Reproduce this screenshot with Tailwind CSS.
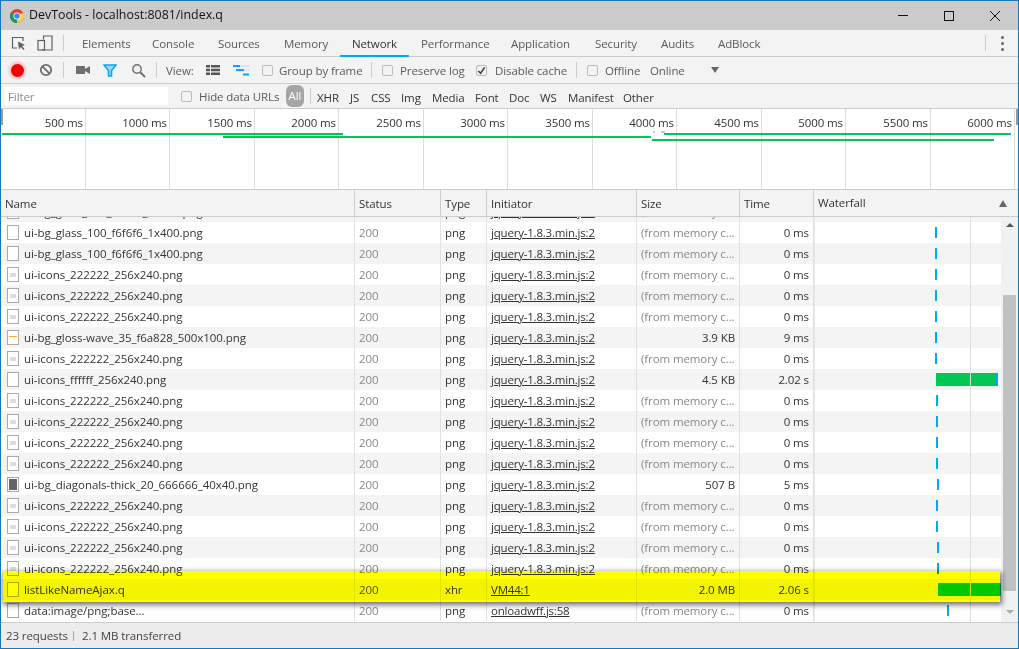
<!DOCTYPE html>
<html lang="en">
<head>
    <meta charset="UTF-8">
    <title>DevTools - localhost:8081/index.q</title>
    <script src="https://cdn.jsdelivr.net/npm/@tailwindcss/browser@4"></script>
</head>
<body class="bg-[#f3f3f3] font-['Open_Sans',sans-serif] text-[11.5px] tracking-[-0.1px] text-[#333]">
<div id="win" class="relative w-[1019px] h-[649px] overflow-hidden flex flex-col border-x border-b border-t border-[#1a76bd] bg-[#f3f3f3]">

    <!-- title bar -->
    <div class="h-[29px] shrink-0 bg-[#cbcbcb] flex items-center pl-[8px]">
        <svg width="16" height="16" viewBox="0 0 16 16" class="mr-[4px]">
            <circle cx="8" cy="8" r="7" fill="#db4437"/>
            <path d="M8 8 L1.9 11.5 A7 7 0 0 0 8 15 Z" fill="#0f9d58"/>
            <path d="M8 8 L1.9 11.5 A7 7 0 0 1 1.9 4.5 Z" fill="#0f9d58"/>
            <path d="M8 8 L14.1 4.5 A7 7 0 0 1 8 15 Z" fill="#ffcd40"/>
            <circle cx="8" cy="8" r="3.6" fill="#fff"/>
            <circle cx="8" cy="8" r="2.8" fill="#4285f4"/>
        </svg>
        <span class="text-[12.4px] tracking-normal text-[#111]">DevTools - localhost:8081/index.q</span>
        <div class="ml-auto flex items-center">
            <div class="w-[46px] flex justify-center"><div class="w-[10px] h-px bg-[#111]"></div></div>
            <div class="w-[46px] flex justify-center"><div class="w-[10px] h-[10px] border border-[#111]"></div></div>
            <div class="w-[46px] flex justify-center">
                <svg width="10" height="10" viewBox="0 0 10 10"><path d="M0 0 L10 10 M10 0 L0 10" stroke="#111" stroke-width="1"/></svg>
            </div>
        </div>
    </div>

    <!-- tabs -->
    <div class="h-[27px] shrink-0 flex items-center border-b border-[#ccc] text-[#5a5a5a] whitespace-nowrap">
        <svg width="16" height="16" viewBox="0 0 16 16" class="ml-[10px]">
            <path d="M6 13 H1.5 V2.5 H12 V6" fill="none" stroke="#5f5f5f" stroke-width="1.2"/>
            <path d="M7 6.5 L14 10 L11 11 L13.5 14 L12.3 15 L10 12 L8 14.5 Z" fill="#5f5f5f"/>
        </svg>
        <svg width="16" height="16" viewBox="0 0 16 16" class="ml-[10px]">
            <path d="M6.5 4.5 V1 H15 V15 H5" fill="none" stroke="#5f5f5f" stroke-width="1.2"/>
            <rect x="1" y="5.5" width="6.5" height="9.5" fill="none" stroke="#5f5f5f" stroke-width="1.2"/>
        </svg>
        <div class="w-px h-[16px] bg-[#ccc] ml-[10px]"></div>
        <span class="ml-[18px] w-[47px] pt-[2px]">Elements</span>
        <span class="ml-[23px] w-[43px] pt-[2px]">Console</span>
        <span class="ml-[23px] w-[42px] pt-[2px]">Sources</span>
        <span class="ml-[24px] w-[44px] pt-[2px]">Memory</span>
        <span class="relative ml-[12px] h-full w-[69px] flex items-center justify-center pt-[2px] text-[#333]">Network<span class="absolute left-0 right-0 -bottom-px h-[2px] bg-[#03a9f4]"></span></span>
        <span class="ml-[12px] w-[66px] pt-[2px]">Performance</span>
        <span class="ml-[24px] w-[60px] pt-[2px]">Application</span>
        <span class="ml-[24px] w-[41px] pt-[2px]">Security</span>
        <span class="ml-[25px] w-[33px] pt-[2px]">Audits</span>
        <span class="ml-[24px] pt-[2px]">AdBlock</span>
        <div class="ml-auto w-px h-[16px] bg-[#ccc] mr-[15px]"></div>
        <div class="flex flex-col gap-[3px] mr-[14px]">
            <div class="w-[3px] h-[3px] rounded-full bg-[#666]"></div>
            <div class="w-[3px] h-[3px] rounded-full bg-[#666]"></div>
            <div class="w-[3px] h-[3px] rounded-full bg-[#666]"></div>
        </div>
    </div>

    <!-- network toolbar -->
    <div class="h-[27px] shrink-0 flex items-center border-b border-[#ccc] text-[#5a5a5a] whitespace-nowrap">
        <div class="ml-[10px] w-[13px] h-[13px] rounded-full bg-[#ef0000] shadow-[0_0_3px_2px_rgba(230,80,80,0.35)]"></div>
        <svg width="14" height="14" viewBox="0 0 14 14" class="ml-[15px]">
            <circle cx="7" cy="7" r="5.2" fill="none" stroke="#6e6e6e" stroke-width="1.8"/>
            <path d="M3.4 3.4 L10.6 10.6" stroke="#6e6e6e" stroke-width="1.8"/>
        </svg>
        <div class="w-px h-[16px] bg-[#ccc] ml-[10px]"></div>
        <svg width="14" height="10" viewBox="0 0 14 10" class="ml-[12px]">
            <rect x="0" y="1" width="9" height="8" fill="#6e6e6e"/>
            <path d="M9 4 L14 1 V9 L9 6 Z" fill="#6e6e6e"/>
        </svg>
        <svg width="14" height="13" viewBox="0 0 14 13" class="ml-[13px]">
            <path d="M1 1 H13 L8.5 6.5 V12 H5.5 V6.5 Z" fill="#9fdcfa" stroke="#03a9f4" stroke-width="1.6"/>
        </svg>
        <svg width="15" height="15" viewBox="0 0 15 15" class="ml-[14px]">
            <circle cx="6" cy="6" r="4.2" fill="none" stroke="#6e6e6e" stroke-width="1.4"/>
            <path d="M9 9 L14 14" stroke="#6e6e6e" stroke-width="1.8"/>
        </svg>
        <div class="w-px h-[16px] bg-[#ccc] ml-[10px]"></div>
        <span class="ml-[9px] w-[28px] pt-[2px]">View:</span>
        <svg width="14" height="10" viewBox="0 0 14 10" class="ml-[12px]">
            <path d="M0 0 H4 V2.5 H0 Z M5 0 H14 V2.5 H5 Z M0 3.7 H4 V6.2 H0 Z M5 3.7 H14 V6.2 H5 Z M0 7.5 H4 V10 H0 Z M5 7.5 H14 V10 H5 Z" fill="#555"/>
        </svg>
        <svg width="17" height="11" viewBox="0 0 17 11" class="ml-[13px]">
            <path d="M0 0 H7 V2 H0 Z M3 4 H11 V6 H3 Z M10 8.5 H16 V10.5 H10 Z" fill="#03a9f4"/>
            <path d="M7 0 H17 V2 H7 Z M11 4 H17 V6 H11 Z" fill="#cfeafa"/>
        </svg>
        <span class="ml-[12px] w-[11px] h-[11px] rounded-[2px] border border-[#bbb] bg-[#f3f3f3]"></span>
        <span class="ml-[6px] w-[83px] pt-[2px]">Group by frame</span>
        <div class="w-px h-[16px] bg-[#ccc] ml-[9px]"></div>
        <span class="ml-[10px] w-[11px] h-[11px] rounded-[2px] border border-[#bbb] bg-[#f3f3f3]"></span>
        <span class="ml-[7px] w-[65px] pt-[2px]">Preserve log</span>
        <span class="ml-[11px] w-[11px] h-[11px] rounded-[2px] border border-[#bbb] bg-[#eee] flex items-center justify-center">
            <svg width="9" height="9" viewBox="0 0 10 10"><path d="M1.5 5.5 L4 8 L8.5 1.5" fill="none" stroke="#444" stroke-width="1.8"/></svg>
        </span>
        <span class="ml-[8px] w-[71px] pt-[2px]">Disable cache</span>
        <div class="w-px h-[16px] bg-[#ccc] ml-[10px]"></div>
        <span class="ml-[10px] w-[11px] h-[11px] rounded-[2px] border border-[#bbb] bg-[#f3f3f3]"></span>
        <span class="ml-[7px] w-[35px] pt-[2px]">Offline</span>
        <span class="ml-[10px] w-[35px] pt-[2px]">Online</span>
        <span class="ml-[26px] w-0 h-0 border-x-[4px] border-x-transparent border-t-[6px] border-t-[#666]"></span>
    </div>

    <!-- filter bar -->
    <div class="h-[25px] shrink-0 flex items-center border-b border-[#ccc] text-[#333] whitespace-nowrap">
        <div class="ml-[4px] w-[163px] h-[18px] bg-white pl-[3px] leading-[20px] text-[#888]">Filter</div>
        <span class="ml-[13px] w-[11px] h-[11px] rounded-[2px] border border-[#bbb] bg-[#f3f3f3]"></span>
        <span class="ml-[7px] w-[80px] text-[#5a5a5a] pt-[2px]">Hide data URLs</span>
        <span class="ml-[7px] w-[18px] h-[22px] rounded-[6px] bg-[#a5a5a5] text-white flex items-center justify-center">All</span>
        <div class="w-px h-[16px] bg-[#ccc] ml-[6px]"></div>
        <span class="ml-[6px] w-[23px] pt-[3px]">XHR</span>
        <span class="ml-[10px] w-[11px] pt-[3px]">JS</span>
        <span class="ml-[10px] w-[20px] pt-[3px]">CSS</span>
        <span class="ml-[10px] w-[20px] pt-[3px]">Img</span>
        <span class="ml-[11px] w-[32px] pt-[3px]">Media</span>
        <span class="ml-[11px] w-[24px] pt-[3px]">Font</span>
        <span class="ml-[10px] w-[20px] pt-[3px]">Doc</span>
        <span class="ml-[11px] w-[17px] pt-[3px]">WS</span>
        <span class="ml-[11px] w-[44px] pt-[3px]">Manifest</span>
        <span class="ml-[11px] pt-[3px]">Other</span>
    </div>

    <!-- overview -->
    <div id="overview" class="relative h-[81px] shrink-0 bg-white border-b border-[#ccc]"></div>

    <!-- header -->
    <div class="h-[27px] shrink-0 flex border-b border-[#ccc] text-[#333] bg-[#f3f3f3] leading-[28px]">
        <div class="w-[354px] pl-[4px] border-r border-[#ccc]">Name</div>
        <div class="w-[86px] pl-[4px] border-r border-[#ccc]">Status</div>
        <div class="w-[46px] pl-[4px] border-r border-[#ccc]">Type</div>
        <div class="w-[150px] pl-[4px] border-r border-[#ccc]">Initiator</div>
        <div class="w-[103px] pl-[4px] border-r border-[#ccc]">Size</div>
        <div class="w-[74px] pl-[4px] border-r border-[#ccc]">Time</div>
        <div class="flex-1 pl-[4px] flex items-center justify-between pr-[11px]">Waterfall
            <span class="w-0 h-0 border-x-[4px] border-x-transparent border-b-[7px] border-b-[#666]"></span>
        </div>
    </div>

    <!-- rows -->
    <div class="relative h-[405px] shrink-0 bg-white overflow-hidden flex">
        <div id="rows" class="w-[1000px] shrink-0 -mt-[16px]"></div>
        <div class="absolute left-[812px] top-0 bottom-0 w-[2px] bg-[#ddd]/60"></div>
        <div class="absolute left-[969px] top-0 bottom-0 w-px bg-[#ddd]"></div>
        <div class="flex-1 bg-[#f1f1f1] relative">
            <div class="absolute left-[2px] w-[13px] top-[78px] h-[296px] bg-[#c1c1c1]"></div>
            <div class="absolute top-[6px] left-[5px] w-0 h-0 border-x-[4px] border-x-transparent border-b-[4px] border-b-[#555]"></div>
            <div class="absolute bottom-[8px] left-[5px] w-0 h-0 border-x-[4px] border-x-transparent border-t-[4px] border-t-[#aaa]"></div>
        </div>
    </div>

    <!-- footer -->
    <div class="flex-1 border-t border-[#ccc] bg-[#ececec] flex items-center pl-[5px] text-[#444] whitespace-nowrap">
        <span class="w-[61px]">23 requests</span><span class="ml-[6px] mr-[8px] w-px h-[10px] bg-[#aaa]"></span><span>2.1 MB transferred</span>
    </div>

    <!-- highlighted request, drawn over the table -->
    <div class="absolute left-[2px] top-[570px] w-[997px] h-[31px] bg-[#ffff00] mix-blend-multiply shadow-[1px_2px_5px_1px_rgba(0,0,0,0.55)]"></div>
</div>

<script>
    var ticks = [85, 169, 254, 338, 423, 507, 592, 676, 761, 845, 930, 1014];
    var overview = document.getElementById('overview');
    var html = '<div class="absolute left-0 top-0 w-[2px] h-[16px] bg-[#999]"></div>' +
        '<div class="absolute right-0 top-0 w-[2px] h-[16px] bg-[#999]"></div>';
    ticks.forEach(function (x, i) {
        html += '<div class="absolute top-0 bottom-0 w-px bg-[#ddd]" style="left:' + (x - 1) + 'px"></div>';
        html += '<div class="absolute top-[5px] text-[#333] whitespace-nowrap" style="right:' + (1019 - x + 1) + 'px">' + ((i + 1) * 500) + ' ms</div>';
    });
    // overview bars: [from, top, to, colour]
    [[1, 24, 340, '#00c853'], [340, 24, 342, '#03a9f4'], [222, 27, 650, '#00c853'], [663, 24, 1006, '#00c853'],
     [1006, 24, 1010, '#03a9f4'], [651, 30, 993, '#00c853'], [652, 22, 654, '#ccc'], [660, 22, 664, '#ccc']].forEach(function (b) {
        html += '<div class="absolute h-[2px]" style="left:' + b[0] + 'px;top:' + b[1] + 'px;width:' + (b[2] - b[0]) + 'px;background:' + b[3] + '"></div>';
    });
    overview.innerHTML = html;

    var j = 'jquery-1.8.3.min.js:2', m = '(from memory c...';
    var data = [
        ['ui-bg_glass_100_f6f6f6_1x400.png', 'png', j, m, '0 ms', 'b', 935, 'blank'],
        ['ui-bg_glass_100_f6f6f6_1x400.png', 'png', j, m, '0 ms', 'b', 935, 'blank'],
        ['ui-bg_glass_100_f6f6f6_1x400.png', 'png', j, m, '0 ms', 'b', 935, 'blank'],
        ['ui-icons_222222_256x240.png', 'png', j, m, '0 ms', 'b', 935, 'icon'],
        ['ui-icons_222222_256x240.png', 'png', j, m, '0 ms', 'b', 935, 'icon'],
        ['ui-icons_222222_256x240.png', 'png', j, m, '0 ms', 'b', 935, 'icon'],
        ['ui-bg_gloss-wave_35_f6a828_500x100.png', 'png', j, '3.9 KB', '9 ms', 'b', 935, 'line'],
        ['ui-icons_222222_256x240.png', 'png', j, m, '0 ms', 'b', 935, 'icon'],
        ['ui-icons_ffffff_256x240.png', 'png', j, '4.5 KB', '2.02 s', 'g', 936, 'blank'],
        ['ui-icons_222222_256x240.png', 'png', j, m, '0 ms', 'b', 936, 'icon'],
        ['ui-icons_222222_256x240.png', 'png', j, m, '0 ms', 'b', 936, 'icon'],
        ['ui-icons_222222_256x240.png', 'png', j, m, '0 ms', 'b', 936, 'icon'],
        ['ui-icons_222222_256x240.png', 'png', j, m, '0 ms', 'b', 936, 'icon'],
        ['ui-bg_diagonals-thick_20_666666_40x40.png', 'png', j, '507 B', '5 ms', 'b', 937, 'dark'],
        ['ui-icons_222222_256x240.png', 'png', j, m, '0 ms', 'b', 936, 'icon'],
        ['ui-icons_222222_256x240.png', 'png', j, m, '0 ms', 'b', 936, 'icon'],
        ['ui-icons_222222_256x240.png', 'png', j, m, '0 ms', 'b', 937, 'icon'],
        ['ui-icons_222222_256x240.png', 'png', j, m, '0 ms', 'b', 937, 'icon'],
        ['listLikeNameAjax.q', 'xhr', 'VM44:1', '2.0 MB', '2.06 s', 'G', 938, 'blank'],
        ['data:image/png;base...', 'png', 'onloadwff.js:58', m, '0 ms', 'b', 947, 'blank']
    ];

    var thumbs = {
        blank: '',
        icon: '<span class="absolute left-[2px] top-[5px] w-[6px] h-[4px] bg-[#ddd]"></span>',
        line: '<span class="absolute left-[1px] right-[1px] top-[5px] h-px bg-[#f6a828]"></span>',
        dark: '<span class="absolute left-[1px] top-[1px] right-[1px] bottom-[1px] bg-[#666]"></span>'
    };

    var out = '';
    data.forEach(function (r, i) {
        var bg = i % 2 === 0 ? 'bg-[#f4f4f4]' : 'bg-white';
        var memory = r[3] === m;
        var left = 'left:' + (r[6] - 814) + 'px';
        var bar;
        if (r[5] === 'b') bar = '<span class="absolute top-[5px] w-[2px] h-[11px] bg-[#03a9f4]" style="' + left + '"></span>';
        if (r[5] === 'g') bar = '<span class="absolute top-[4px] h-[13px] w-[62px] bg-[#00c853] border-r-2 border-[#03a9f4]" style="' + left + '"></span>';
        if (r[5] === 'G') bar = '<span class="absolute top-[4px] h-[13px] w-[63px] bg-[#00c853]" style="' + left + '"></span>';
        out += '<div class="flex h-[21px] leading-[21px] ' + bg + '">' +
            '<div class="w-[354px] shrink-0 border-r border-[#e1e1e1] pl-[6px] flex items-center whitespace-nowrap tracking-[-0.05px]">' +
                '<span class="relative w-[12px] h-[15px] border border-[#aaa] bg-white mr-[5px] shrink-0">' + thumbs[r[7]] + '</span>' + r[0] + '</div>' +
            '<div class="w-[86px] shrink-0 border-r border-[#e1e1e1] pl-[4px] ' + (r[5] === 'G' ? 'text-[#555]' : 'text-[#888]') + '">200</div>' +
            '<div class="w-[46px] shrink-0 border-r border-[#e1e1e1] pl-[4px]">' + r[1] + '</div>' +
            '<div class="w-[150px] shrink-0 border-r border-[#e1e1e1] pl-[4px] underline tracking-[-0.2px]">' + r[2] + '</div>' +
            '<div class="w-[103px] shrink-0 border-r border-[#e1e1e1] px-[4px] whitespace-nowrap ' + (memory ? 'text-[#888]' : 'text-right') + '">' + r[3] + '</div>' +
            '<div class="w-[74px] shrink-0 border-r border-[#e1e1e1] px-[4px] text-right">' + r[4] + '</div>' +
            '<div class="relative flex-1">' + bar + '</div>' +
            '</div>';
    });
    document.getElementById('rows').innerHTML = out;
</script>
</body>
</html>
